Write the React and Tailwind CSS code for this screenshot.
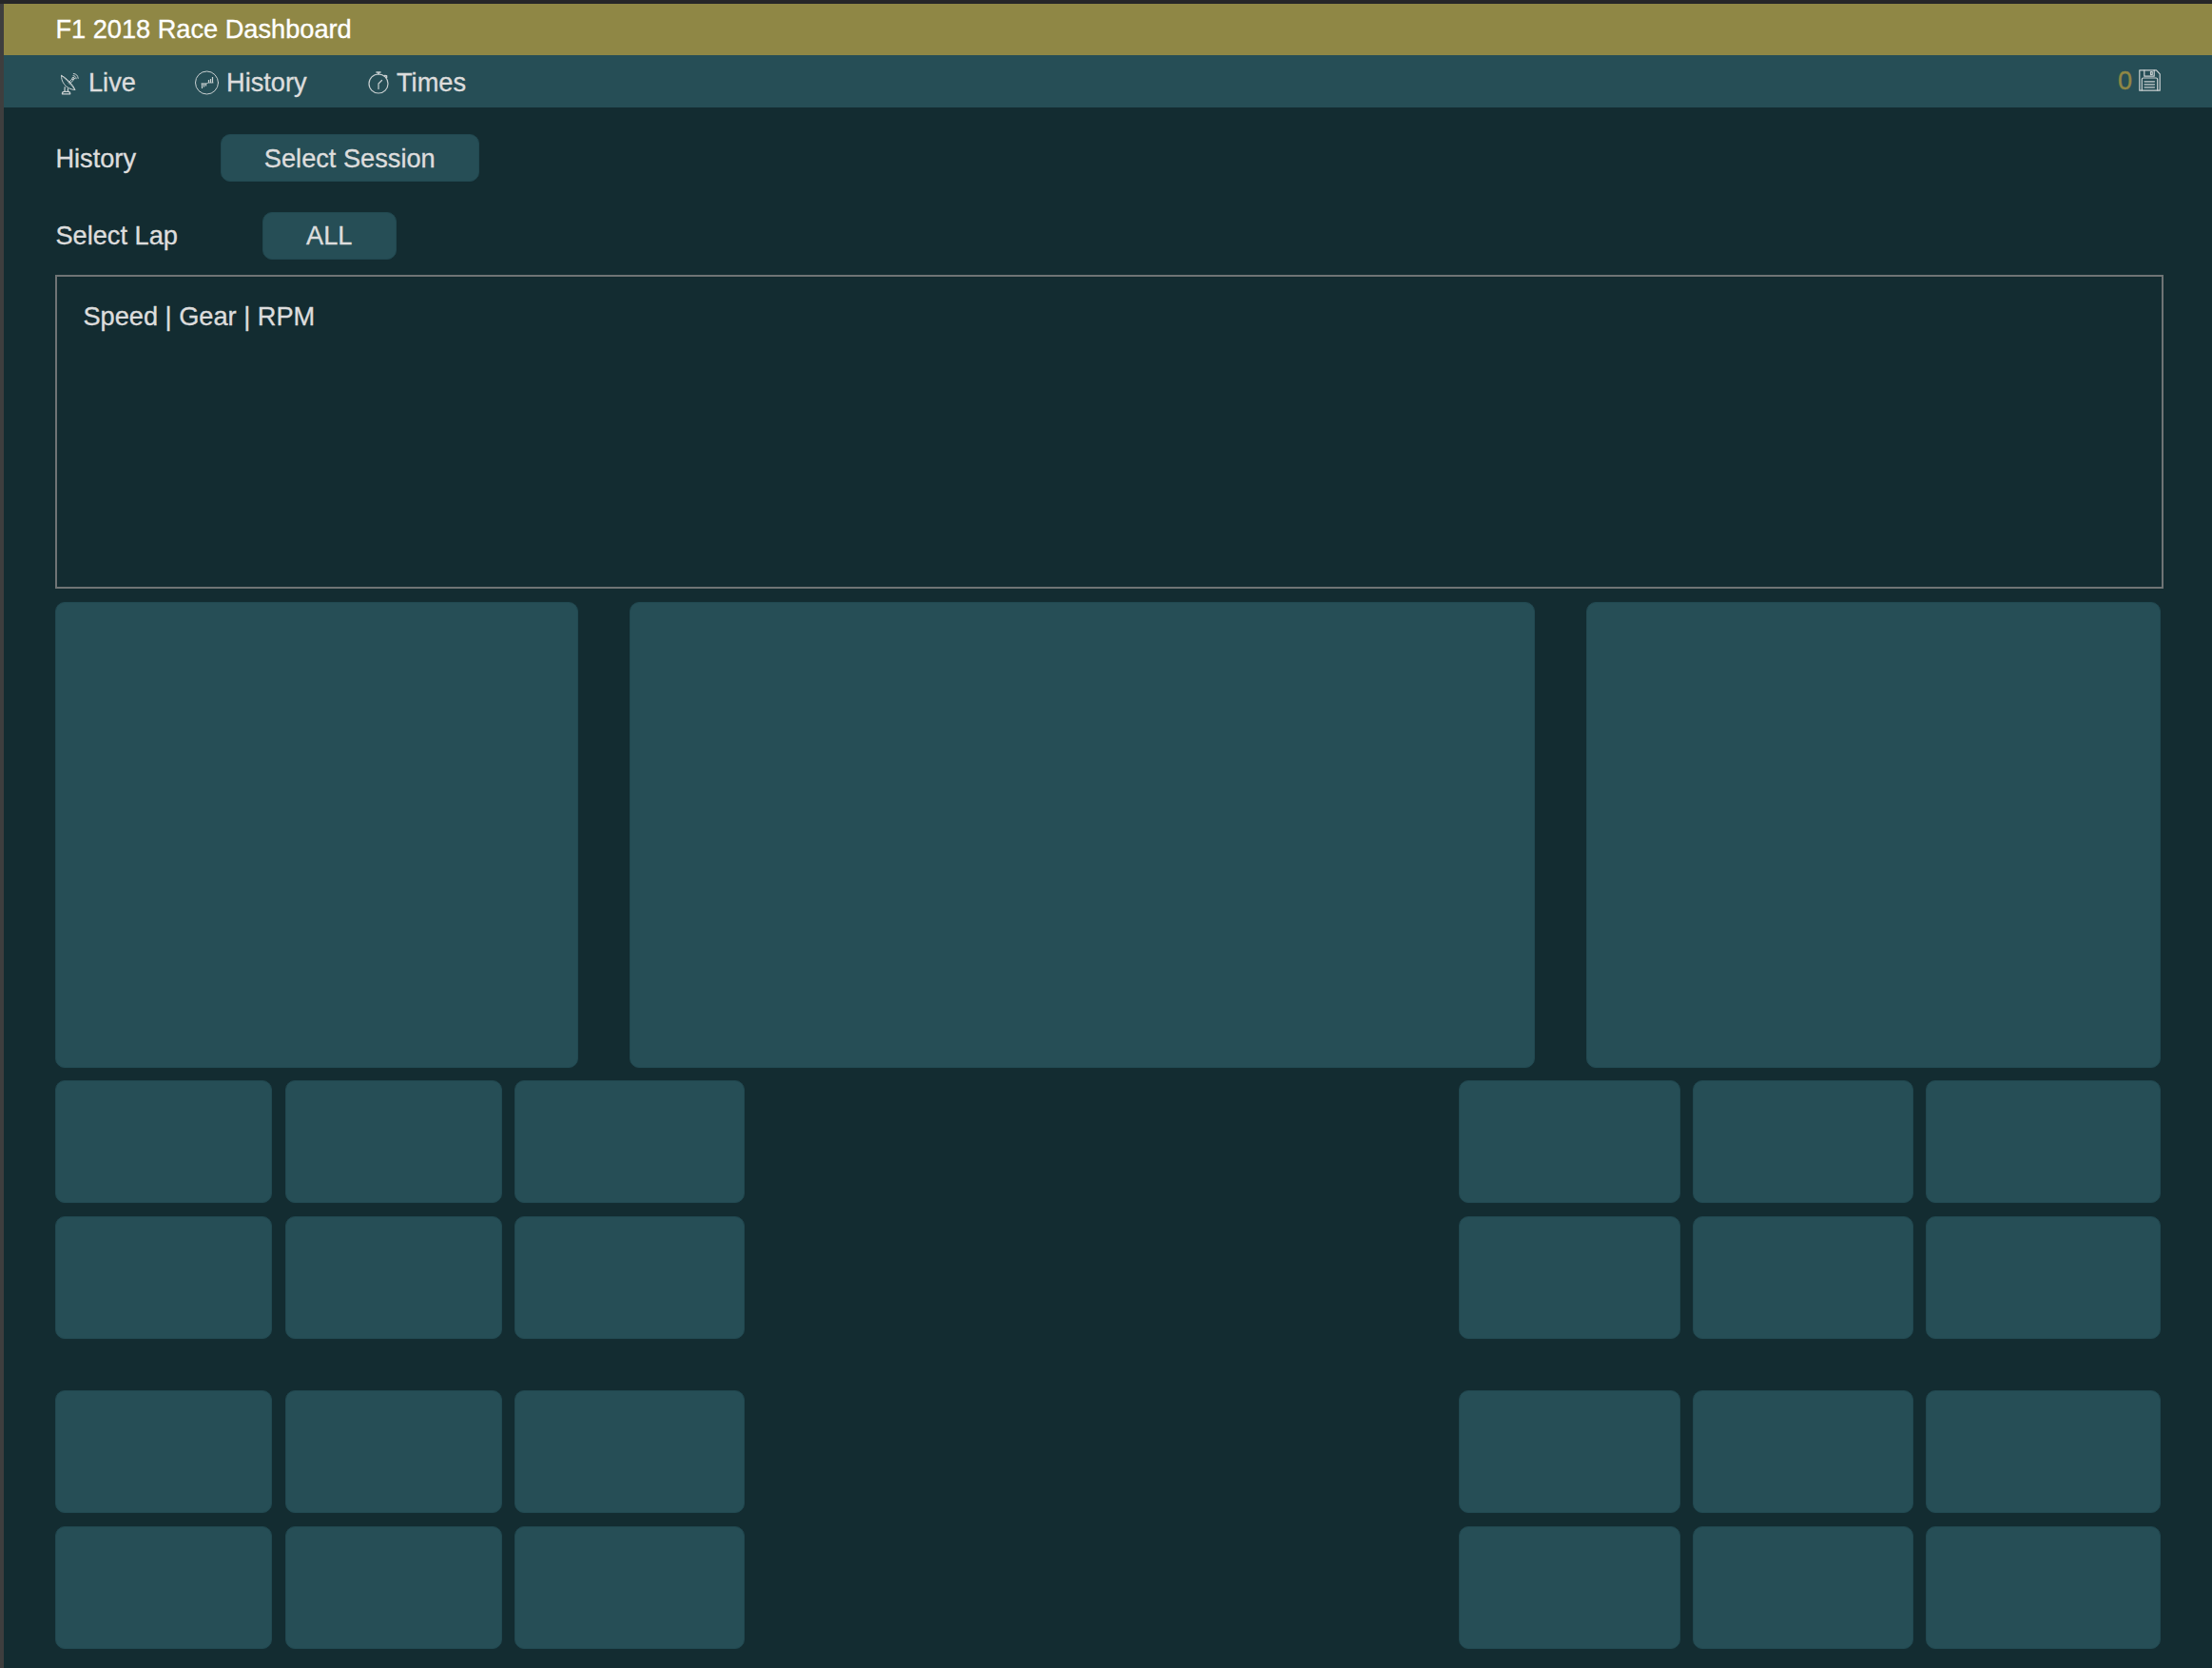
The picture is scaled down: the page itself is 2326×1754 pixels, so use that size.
const ink = { fill: "none", stroke: "#c9d0d1", strokeLinecap: "round", strokeLinejoin: "round" };

function DishIcon() {
  return (
    <svg className="mt-0.5 block h-6 w-5 shrink-0" viewBox="0 0 20 24" strokeWidth="1" {...ink}>
      <path d="M1.600 3.500C.8 8.500 5.500 17.800 15.800 18.500C13.500 14.500 6 6.500 1.600 3.500Z" />
      <path d="M1.600 3.500C5 4.300 14.800 13.500 15.800 18.500" />
      <path d="M9 11L13 6.800M10.300 12.300L14.300 8" />
      <circle cx="14" cy="6.500" r="1.200" />
      <path d="M14 3.600c1.800.1 3 1.200 3.100 3.200M14.300 1.500c3 .2 4.700 2 4.900 4.900" />
      <path d="M5.200 15.500L4.900 20.300M8.300 17.300L8.700 20.300M2.400 22.800c0-1.600.8-2.400 2.100-2.400h4.200c1.300 0 2.100.8 2.100 2.400Z" strokeWidth="1.200" />
    </svg>
  );
}

function HistoryIcon() {
  return (
    <svg className="block h-[26px] w-[26px] shrink-0" viewBox="0 0 26 26" strokeWidth="1" {...ink}>
      <circle cx="12.500" cy="13" r="12" />
      <path d="M7.500 13.500v5.500M9.500 13.500v4M11.500 13.500v3M14.500 13v-3M16.500 13v-4M18.500 13v-6" strokeWidth="1.200" strokeLinecap="butt" />
      <path d="M7 14h5l2-1h5" strokeWidth=".8" />
    </svg>
  );
}

function StopwatchIcon() {
  return (
    <svg className="block h-6 w-[22px] shrink-0" viewBox="0 0 22 24" strokeWidth="1.200" {...ink}>
      <circle cx="11" cy="13" r="10" />
      <path d="M9 1h4M11 1v2M17.500 4.500l2 .3v2" strokeWidth="1.600" />
      <path d="M11 18.500v-5.500l3.500-3.500" />
    </svg>
  );
}

function SaveIcon() {
  return (
    <svg className="block h-[23px] w-[23px] shrink-0" viewBox="0 0 23 23" strokeWidth="1.200" {...ink}>
      <path d="M.8.8h17.700l3.700 4v17.400H.8Z" />
      <path d="M5.800.8v6.400h10.400V.8M12.500 2.500h1.700v3h-1.700Z" />
      <path d="M3.300 22v-11.500q0-1.500 1.500-1.500h13.400q1.500 0 1.500 1.500V22" />
      <path d="M6 12.800h10.500M6 15.800h10.500M6 18.800h10.500" />
    </svg>
  );
}

function Panel() {
  return <div className="rounded-[10px] border border-[#214850] bg-[#264e56]" />;
}

function CardGrid({ className }) {
  return (
    <div className={`grid auto-rows-[129.2px] gap-x-[13.3px] gap-y-[13.6px] ${className}`}>
      {Array.from({ length: 6 }, (_, i) => (
        <Panel key={i} />
      ))}
    </div>
  );
}

function CardRow() {
  return (
    <div className="flex justify-between">
      <CardGrid className="grid-cols-[228px_228px_241.7px]" />
      <CardGrid className="grid-cols-[233px_231.5px_246.5px]" />
    </div>
  );
}

export default function App() {
  return (
    <div className="h-[1754px] w-[2326px] overflow-hidden border-t-4 border-t-[#262628] bg-[#132c31] font-['Liberation_Sans',sans-serif] text-[27.2px] leading-[30px] text-[#dddddd] [-webkit-text-stroke:0.35px]">
      <div className="h-full border-l-4 border-[#3e3e3e]">
        <header className="flex h-[54px] items-center bg-[#8f8745] pl-[54.4px] text-white">
          <h1>F1 2018 Race Dashboard</h1>
        </header>
        <nav className="flex h-[55px] items-center bg-[#264e56] pt-0.5 pr-[54px] pl-[59px]">
          <a className="flex w-[142px] items-center gap-[10px]">
            <DishIcon />
            <span>Live</span>
          </a>
          <a className="flex w-[182px] items-center gap-[7px]">
            <HistoryIcon />
            <span>History</span>
          </a>
          <a className="flex items-center gap-[8px]">
            <StopwatchIcon />
            <span>Times</span>
          </a>
          <div className="ml-auto flex items-center gap-[7px] pb-[4px]">
            <span className="text-[#8f8745]">0</span>
            <SaveIcon />
          </div>
        </nav>
        <main className="px-[54.4px]">
          <div className="flex h-[78px] items-end">
            <span className="w-[173.4px] pb-[9px]">History</span>
            <button className="h-[50px] w-[272px] rounded-[10px] border border-[#214850] bg-[#264e56] pt-0.5">Select Session</button>
          </div>
          <div className="flex h-[82px] items-end">
            <span className="w-[217.4px] pb-[10px]">Select Lap</span>
            <button className="h-[50px] w-[141px] rounded-[10px] border border-[#214850] bg-[#264e56]">ALL</button>
          </div>
          <section className="mt-4 -mr-[3px] h-[330px] border-2 border-[#6f7475] pt-[27px] pl-[27px]">
            Speed | Gear | RPM
          </section>
          <div className="mt-[13.6px] grid h-[490px] grid-cols-[549.6px_952px_603.4px] justify-between">
            <Panel />
            <Panel />
            <Panel />
          </div>
          <div className="mt-[13.4px] flex flex-col gap-[54px]">
            <CardRow />
            <CardRow />
          </div>
        </main>
      </div>
    </div>
  );
}
